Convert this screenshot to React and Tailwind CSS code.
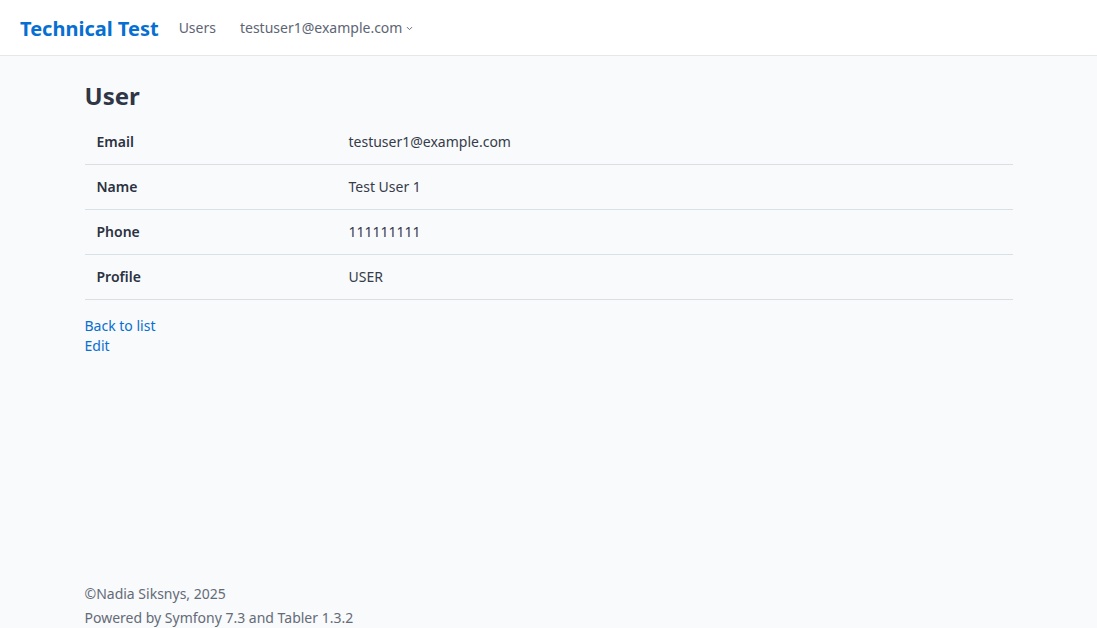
import React from 'react';

const rows = [
  { label: 'Email', value: 'testuser1@example.com' },
  { label: 'Name', value: 'Test User 1' },
  { label: 'Phone', value: '111111111' },
  { label: 'Profile', value: 'USER' },
];

export default function App() {
  return (
    <div className="min-h-screen flex flex-col bg-[#f9fafb] text-[#353c4a] text-[14px] leading-5 font-['Noto_Sans',sans-serif]">
      <header className="h-[56px] bg-white border-b border-[#e6e7e9] flex items-center px-5 pt-px">
        <a className="text-[20px] font-bold text-[#066fd1] leading-7 mr-[20px] pt-[2px]">Technical Test</a>
        <nav className="flex items-center gap-6 text-[#5d6574]">
          <a>Users</a>
          <a className="flex items-center gap-[3px]">
            testuser1@example.com
            <svg width="9" height="9" viewBox="0 0 24 24" fill="none" stroke="currentColor" strokeWidth="2.5" strokeLinecap="round" strokeLinejoin="round" className="mt-px">
              <path d="M6 9l6 6 6-6" />
            </svg>
          </a>
        </nav>
      </header>

      <main className="flex-1">
        <div className="w-[928px] mx-auto pt-[24px]">
          <h1 className="text-[24px] font-bold leading-8 mb-[8px] text-[#2f3647]">User</h1>
          <table className="w-full border-collapse mb-4">
            <tbody>
              {rows.map((r) => (
                <tr key={r.label} className="border-b border-[#dadfe5]">
                  <th className="w-[252px] text-left font-semibold px-3 py-3 text-[#2b3242]">{r.label}</th>
                  <td className="px-3 py-3">{r.value}</td>
                </tr>
              ))}
            </tbody>
          </table>
          <div className="flex flex-col items-start text-[#066fd1]">
            <a>Back to list</a>
            <a>Edit</a>
          </div>
        </div>
      </main>

      <footer className="w-[928px] mx-auto text-[#646b78]">
        <p>©Nadia Siksnys, 2025</p>
        <p className="mt-1">Powered by Symfony 7.3 and Tabler 1.3.2</p>
      </footer>
    </div>
  );
}
